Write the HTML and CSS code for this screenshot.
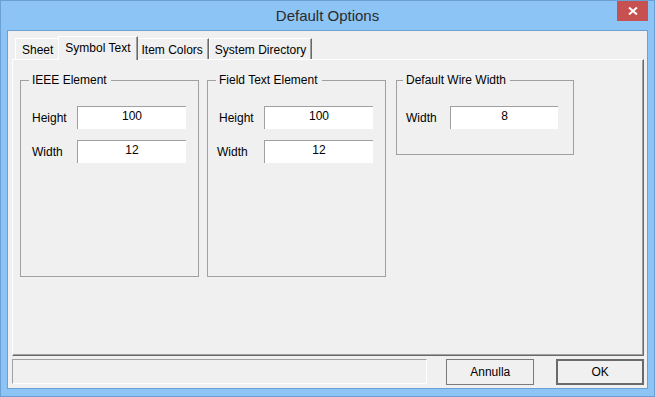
FILE: index.html
```html
<!DOCTYPE html>
<html>
<head>
<meta charset="utf-8">
<link rel="stylesheet" href="styles.css">
</head>
<body>
<div class="window">
  <div class="titlebar">
    <span></span>
    <div class="title">Default Options</div>
    <div class="close">
      <svg width="10" height="8" viewBox="0 0 10 8"><path d="M1 0.5 L9 7.5 M9 0.5 L1 7.5" stroke="#fff" stroke-width="2" fill="none"/></svg>
    </div>
  </div>
  <div class="client">
    <div class="tabs">
      <div class="tab first">Sheet</div>
      <div class="tab active">Symbol Text</div>
      <div class="tab">Item Colors</div>
      <div class="tab">System Directory</div>
    </div>
    <div class="panel">
      <fieldset class="group tall">
        <legend>IEEE Element</legend>
        <div class="rows">
          <div class="row"><span class="label">Height</span><div class="field">100</div></div>
          <div class="row"><span class="label">Width</span><div class="field">12</div></div>
        </div>
      </fieldset>
      <fieldset class="group tall">
        <legend>Field Text Element</legend>
        <div class="rows">
          <div class="row"><span class="label">Height</span><div class="field">100</div></div>
          <div class="row"><span class="label shift">Width</span><div class="field">12</div></div>
        </div>
      </fieldset>
      <fieldset class="group short">
        <legend>Default Wire Width</legend>
        <div class="rows">
          <div class="row"><span class="label">Width</span><div class="field">8</div></div>
        </div>
      </fieldset>
    </div>
    <div class="footer">
      <div class="status"></div>
      <button class="btn cancel">Annulla</button>
      <button class="btn default">OK</button>
    </div>
  </div>
</div>
</body>
</html>
```

FILE: styles.css
```css
html, body {
  margin: 0;
  padding: 0;
  background: #8bc4f5;
}
body {
  font-family: "Liberation Sans", Arial, sans-serif;
  font-size: 12px;
  color: #000;
}
.window {
  width: 655px;
  height: 397px;
  box-sizing: border-box;
  border: 1px solid #6c9fd3;
  background: #8bc4f5;
  padding: 0 6px 7px;
  display: flex;
  flex-direction: column;
}
.titlebar {
  height: 29px;
  flex: 0 0 29px;
  margin: 0 -6px;
  display: grid;
  grid-template-columns: 1fr auto 1fr;
  align-items: start;
}
.title {
  font-family: "Liberation Sans", Arial, sans-serif;
  font-size: 15px;
  line-height: 30px;
  color: #2b2b2b;
}
.close {
  justify-self: end;
  width: 31px;
  height: 20px;
  margin-right: 6px;
  background: #c75050;
  display: flex;
  align-items: center;
  justify-content: center;
}
.client {
  flex: 1;
  border: 1px solid #6aa0d6;
  background: #f0f0f0;
  padding: 5px 3px 3px 4px;
  display: flex;
  flex-direction: column;
}
.tabs {
  display: flex;
  align-items: flex-end;
  height: 23px;
  flex: 0 0 23px;
  padding-left: 3px;
  position: relative;
  z-index: 1;
}
.tab {
  height: 21px;
  box-sizing: border-box;
  padding: 0 5px;
  border-top: 1px solid #fff;
  border-left: 1px solid #fff;
  border-right: 1px solid #696969;
  box-shadow: inset -1px 0 #a0a0a0;
  line-height: 22px;
  white-space: nowrap;
}
.tab.first {
  padding: 0 6px;
}
.tab.active {
  height: 24px;
  margin: 0 -2px -1px;
  padding: 0 6px;
  background: #f0f0f0;
  position: relative;
  z-index: 2;
  line-height: 22px;
}
.panel {
  flex: 0 0 297px;
  box-sizing: border-box;
  border-top: 1px solid #fff;
  border-left: 1px solid #fff;
  border-right: 1px solid #696969;
  border-bottom: 1px solid #696969;
  box-shadow: inset -1px -1px #a0a0a0;
  padding: 13px 0 0 7px;
  display: flex;
  align-items: flex-start;
  gap: 8px;
}
.group {
  margin: 0;
  box-sizing: border-box;
  width: 179px;
  border: 1px solid #a0a0a0;
  padding: 0 0 0 11px;
  min-width: 0;
}
.group.tall {
  height: 204px;
}
.group.short {
  height: 82px;
  width: 178px;
  margin-left: 2px;
  padding-left: 9px;
}
legend {
  margin-left: -3px;
  padding: 0 4px 0 3px;
  line-height: 14px;
  font-size: 12px;
}
.rows {
  padding-top: 19px;
  display: flex;
  flex-direction: column;
  gap: 11px;
}
.row {
  display: grid;
  grid-template-columns: 45px 109px;
  align-items: center;
  height: 23px;
}
.short .row {
  grid-template-columns: 44px 108px;
}
.label {
  line-height: 20px;
}
.label.shift {
  margin-left: -2px;
}
.field {
  height: 23px;
  box-sizing: border-box;
  background: #fff;
  border-top: 1px solid #a0a0a0;
  border-left: 1px solid #a0a0a0;
  text-align: center;
  line-height: 18px;
}
.footer {
  display: flex;
  margin-top: 3px;
  height: 26px;
  flex: 0 0 26px;
}
.status {
  width: 416px;
  height: 25px;
  box-sizing: border-box;
  border-top: 1px solid #a0a0a0;
  border-left: 1px solid #a0a0a0;
  border-bottom: 1px solid #fff;
  border-right: 1px solid #fff;
}
.btn {
  font-family: "Liberation Sans", Arial, sans-serif;
  font-size: 12px;
  color: #000;
  width: 88px;
  height: 26px;
  box-sizing: border-box;
  background: #f0f0f0;
  border: 1px solid #7a7a7a;
  padding: 0;
  line-height: 22px;
}
.btn.cancel {
  margin-left: 19px;
}
.btn.default {
  margin-left: 22px;
  border: 2px solid #6a6a6a;
}
```
